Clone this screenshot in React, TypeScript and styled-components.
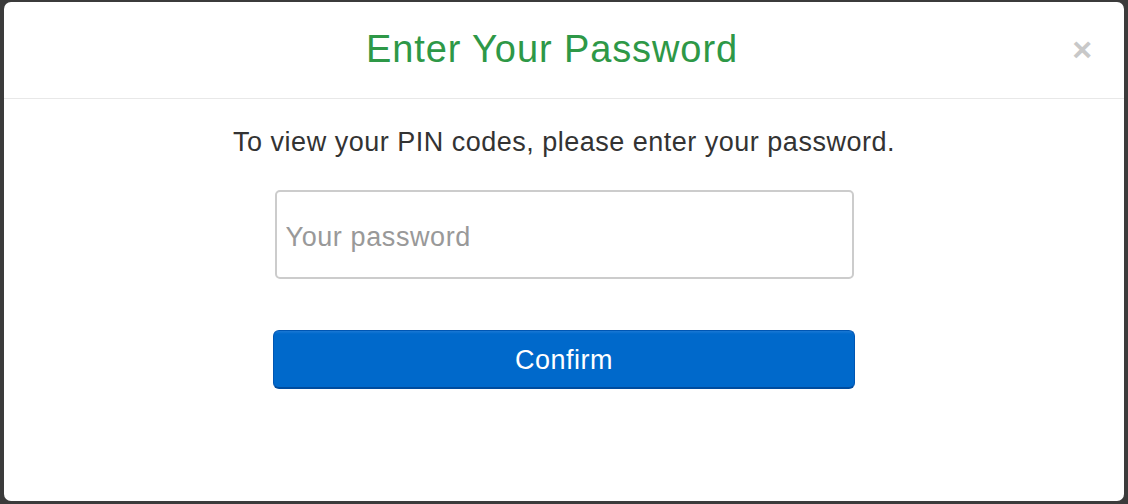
import React from "react";
import styled, { createGlobalStyle } from "styled-components";

const Global = createGlobalStyle`
  html, body { margin: 0; padding: 0; background: #3b3b3b; }
  body { font-family: "Liberation Sans", Arial, Helvetica, sans-serif; }
  * { box-sizing: border-box; }
`;

const Backdrop = styled.div`
  width: 1128px;
  height: 504px;
  padding: 2px 4px 3px 4px;
  display: flex;
`;

const Modal = styled.div`
  flex: 1;
  background: #fff;
  border-radius: 7px;
  display: flex;
  flex-direction: column;
`;

const Header = styled.div`
  position: relative;
  height: 97px;
  padding-right: 24px;
  padding-bottom: 1px;
  border-bottom: 1px solid #e8e8e8;
  display: flex;
  align-items: center;
  justify-content: center;
`;

const Title = styled.h3`
  margin: 0;
  font-size: 38px;
  font-weight: 400;
  color: #2e9847;
  letter-spacing: 0.9px;
`;

const Close = styled.button`
  position: absolute;
  right: 32px;
  top: 30px;
  border: none;
  background: none;
  padding: 0;
  font-family: "Liberation Sans", Arial, sans-serif;
  font-size: 34px;
  font-weight: 700;
  line-height: 34px;
  color: #c8c8c8;
  cursor: pointer;
`;

const Body = styled.div`
  display: flex;
  flex-direction: column;
  align-items: center;
  padding-top: 28px;
`;

const Lead = styled.p`
  margin: 0;
  font-size: 27px;
  line-height: 30px;
  color: #333;
  letter-spacing: 0.5px;
`;

const PasswordInput = styled.input`
  margin-top: 33px;
  width: 579px;
  height: 89px;
  border: 2px solid #cccccc;
  border-radius: 5px;
  padding: 5px 9px 0 9px;
  font-family: "Liberation Sans", Arial, sans-serif;
  font-size: 27px;
  letter-spacing: 0.6px;
  color: #333;
  outline: none;
  &::placeholder { color: #999; }
`;

const ConfirmButton = styled.button`
  margin-top: 51px;
  width: 582px;
  height: 59px;
  padding-top: 3px;
  border: 1px solid #0056b3;
  border-bottom: 2px solid #004c9e;
  border-radius: 6px;
  background: linear-gradient(#1a78d4 0, #0069cb 3px, #0069cb 100%);
  color: #fff;
  font-family: "Liberation Sans", Arial, sans-serif;
  font-size: 27px;
  letter-spacing: 0.5px;
  cursor: pointer;
`;

export default function App() {
  return (
    <>
      <Global />
      <Backdrop>
        <Modal>
          <Header>
            <Title>Enter Your Password</Title>
            <Close aria-label="Close">×</Close>
          </Header>
          <Body>
            <Lead>To view your PIN codes, please enter your password.</Lead>
            <PasswordInput type="password" placeholder="Your password" />
            <ConfirmButton>Confirm</ConfirmButton>
          </Body>
        </Modal>
      </Backdrop>
    </>
  );
}
